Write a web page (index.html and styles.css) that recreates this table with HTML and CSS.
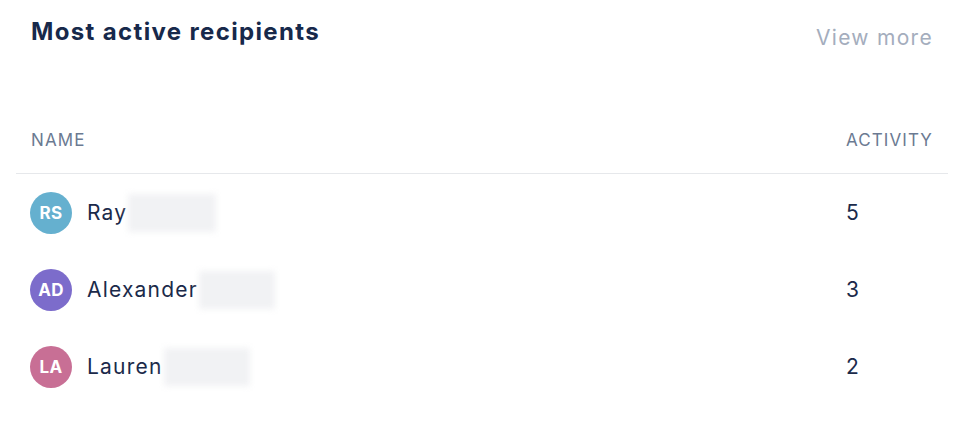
FILE: index.html
```html
<!DOCTYPE html>
<html>
<head>
<meta charset="utf-8">
<link rel="stylesheet" href="styles.css">
</head>
<body>
<div class="card">
  <div class="head">
    <h2 class="title">Most active recipients</h2>
    <a class="more">View more</a>
  </div>
  <div class="table">
    <div class="thead">
      <span class="col-name">NAME</span>
      <span class="col-act">ACTIVITY</span>
    </div>
    <div class="row">
      <div class="person">
        <span class="avatar a1">RS</span>
        <span class="name">Ray</span>
        <span class="blur w1"></span>
      </div>
      <span class="num">5</span>
    </div>
    <div class="row">
      <div class="person">
        <span class="avatar a2">AD</span>
        <span class="name">Alexander</span>
        <span class="blur w2"></span>
      </div>
      <span class="num">3</span>
    </div>
    <div class="row">
      <div class="person">
        <span class="avatar a3">LA</span>
        <span class="name">Lauren</span>
        <span class="blur w3"></span>
      </div>
      <span class="num">2</span>
    </div>
  </div>
</div>
</body>
</html>
```
FILE: styles.css
```css
html, body { margin: 0; padding: 0; background: #fff; }
body { font-family: Inter, "Noto Sans", sans-serif; color: #1b2a4a; }
.card { width: 932px; margin-left: 16px; padding-top: 16px; }
.head { display: flex; justify-content: space-between; align-items: flex-start; padding: 0 15px; }
.title { margin: 0; font-size: 24px; font-weight: 700; color: #17294b; line-height: 32px; letter-spacing: 1.35px; }
.more { font-size: 21px; color: #a4adbd; line-height: 32px; margin-top: 6px; letter-spacing: 1.3px; }
.table { margin-top: 75px; }
.thead { display: flex; justify-content: space-between; padding: 0 15px; font-size: 17px; color: #6b7a92; height: 44px; line-height: 22px; border-bottom: 1px solid #e6e8eb; letter-spacing: 1.1px; }
.row { display: flex; justify-content: space-between; align-items: center; height: 77px; padding: 0 15px 0 14px; }
.person { display: flex; align-items: center; }
.avatar { width: 42px; height: 42px; border-radius: 50%; color: #fff; font-size: 17px; font-weight: 700; display: flex; align-items: center; justify-content: center; margin-right: 15px; letter-spacing: 0.3px; }
.a1 { background: #65b0cf; }
.a2 { background: #7c6ccb; }
.a3 { background: #c86f95; }
.name { font-size: 21px; letter-spacing: 1.2px; }
.blur { display: inline-block; height: 38px; background: #f1f2f4; filter: blur(3px); }
.w1 { width: 88px; margin-left: 1px; }
.w2 { width: 76px; margin-left: 1px; }
.w3 { width: 86px; margin-left: 1px; }
.num { font-size: 21px; width: 87px; }
```
